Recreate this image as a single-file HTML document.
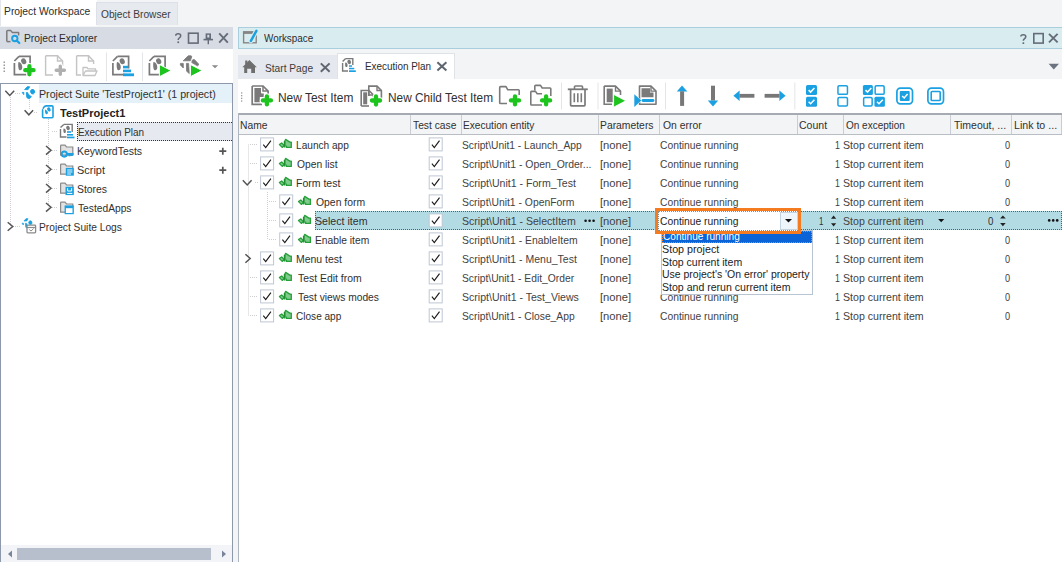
<!DOCTYPE html>
<html><head><meta charset="utf-8"><style>
html,body{margin:0;padding:0;}
body{width:1062px;height:562px;overflow:hidden;position:relative;background:#f3f4f6;font-family:'Liberation Sans', sans-serif;}
</style></head><body>
<div style="position:absolute;left:0px;top:0px;width:97px;height:26px;background:#ffffff;border-left:1px solid #e3e6ea;box-sizing:border-box"></div>
<div style="position:absolute;left:96px;top:2px;width:82px;height:23px;background:#e6e9ee;border:1px solid #dde1e7;border-bottom:none;box-sizing:border-box"></div>
<div style="position:absolute;left:3.76px;top:1.00px;font-family:'Liberation Sans', sans-serif;font-size:11px;line-height:20px;font-weight:normal;color:#2c2c2c;white-space:pre;transform-origin:0 0;transform:scaleX(0.9374)">Project Workspace</div>
<div style="position:absolute;left:101.00px;top:4.00px;font-family:'Liberation Sans', sans-serif;font-size:11px;line-height:20px;font-weight:normal;color:#3c3c3c;white-space:pre;transform-origin:0 0;transform:scaleX(0.9253)">Object Browser</div>
<div style="position:absolute;left:0px;top:27px;width:233px;height:22px;background:#d7dbe3;"></div>
<div style="position:absolute;left:24.46px;top:28.00px;font-family:'Liberation Sans', sans-serif;font-size:11px;line-height:20px;font-weight:normal;color:#2c2c2c;white-space:pre;transform-origin:0 0;transform:scaleX(0.9364)">Project Explorer</div>
<div style="position:absolute;left:0px;top:49px;width:233px;height:34px;background:#ffffff;"></div>
<div style="position:absolute;left:0px;top:83px;width:233px;height:479px;box-sizing:border-box;background:#ffffff;border:1px solid #8d99ab;border-bottom:none"></div>
<div style="position:absolute;left:1px;top:545px;width:231px;height:17px;background:#f2f4f7;"></div>
<div style="position:absolute;left:17px;top:548px;width:194px;height:12px;background:#b8bfcc;"></div>
<svg style="position:absolute;left:7px;top:550px;overflow:visible" width="6" height="8" viewBox="0 0 6 8"><path d="M5 0.5 L1 4 L5 7.5 Z" fill="#7a8599"/></svg>
<svg style="position:absolute;left:221px;top:550px;overflow:visible" width="6" height="8" viewBox="0 0 6 8"><path d="M1 0.5 L5 4 L1 7.5 Z" fill="#7a8599"/></svg>
<div style="position:absolute;left:39px;top:84px;width:193px;height:19px;background:#e5f1f8;"></div>
<div style="position:absolute;left:77px;top:122px;width:155px;height:19px;box-sizing:border-box;background:#e6e9ef;border:1px dotted #333;border-right:none"></div>
<div style="position:absolute;left:39.03px;top:84.00px;font-family:'Liberation Sans', sans-serif;font-size:11px;line-height:20px;font-weight:normal;color:#303030;white-space:pre;transform-origin:0 0;transform:scaleX(0.9669)">Project Suite &#x27;TestProject1&#x27; (1 project)</div>
<div style="position:absolute;left:60.00px;top:103.00px;font-family:'Liberation Sans', sans-serif;font-size:11px;line-height:20px;font-weight:bold;color:#222222;white-space:pre;transform-origin:0 0;transform:scaleX(1.0031)">TestProject1</div>
<div style="position:absolute;left:77.70px;top:122.00px;font-family:'Liberation Sans', sans-serif;font-size:11px;line-height:20px;font-weight:normal;color:#303030;white-space:pre;transform-origin:0 0;transform:scaleX(0.9000)">Execution Plan</div>
<div style="position:absolute;left:77.05px;top:141.00px;font-family:'Liberation Sans', sans-serif;font-size:11px;line-height:20px;font-weight:normal;color:#303030;white-space:pre;transform-origin:0 0;transform:scaleX(0.9507)">KeywordTests</div>
<div style="position:absolute;left:77.01px;top:160.00px;font-family:'Liberation Sans', sans-serif;font-size:11px;line-height:20px;font-weight:normal;color:#303030;white-space:pre;transform-origin:0 0;transform:scaleX(0.9926)">Script</div>
<div style="position:absolute;left:77.05px;top:179.00px;font-family:'Liberation Sans', sans-serif;font-size:11px;line-height:20px;font-weight:normal;color:#303030;white-space:pre;transform-origin:0 0;transform:scaleX(0.9452)">Stores</div>
<div style="position:absolute;left:78.00px;top:198.00px;font-family:'Liberation Sans', sans-serif;font-size:11px;line-height:20px;font-weight:normal;color:#303030;white-space:pre;transform-origin:0 0;transform:scaleX(0.9298)">TestedApps</div>
<div style="position:absolute;left:39.07px;top:217.00px;font-family:'Liberation Sans', sans-serif;font-size:11px;line-height:20px;font-weight:normal;color:#303030;white-space:pre;transform-origin:0 0;transform:scaleX(0.9284)">Project Suite Logs</div>
<div style="position:absolute;left:238px;top:27px;width:824px;height:22px;box-sizing:border-box;background:#d9edf1;border:1px solid #a9cfde;border-right:none"></div>
<div style="position:absolute;left:263.90px;top:28.00px;font-family:'Liberation Sans', sans-serif;font-size:11px;line-height:20px;font-weight:normal;color:#2c2c2c;white-space:pre;transform-origin:0 0;transform:scaleX(0.8982)">Workspace</div>
<div style="position:absolute;left:238px;top:55px;width:99px;height:24px;background:#e5e8ee;"></div>
<div style="position:absolute;left:337px;top:53px;width:118px;height:27px;box-sizing:border-box;background:#ffffff;border:1px solid #dfe3e8;border-bottom:none"></div>
<div style="position:absolute;left:265.07px;top:58.00px;font-family:'Liberation Sans', sans-serif;font-size:11px;line-height:20px;font-weight:normal;color:#3c3c3c;white-space:pre;transform-origin:0 0;transform:scaleX(0.9255)">Start Page</div>
<div style="position:absolute;left:364.70px;top:56.00px;font-family:'Liberation Sans', sans-serif;font-size:11px;line-height:20px;font-weight:normal;color:#2c2c2c;white-space:pre;transform-origin:0 0;transform:scaleX(0.9000)">Execution Plan</div>
<div style="position:absolute;left:238px;top:79px;width:824px;height:34px;background:#ffffff;"></div>
<div style="position:absolute;left:278.41px;top:88.00px;font-family:'Liberation Sans', sans-serif;font-size:12px;line-height:20px;font-weight:normal;color:#303030;white-space:pre;transform-origin:0 0;transform:scaleX(0.9946)">New Test Item</div>
<div style="position:absolute;left:387.51px;top:88.00px;font-family:'Liberation Sans', sans-serif;font-size:12px;line-height:20px;font-weight:normal;color:#303030;white-space:pre;transform-origin:0 0;transform:scaleX(0.9867)">New Child Test Item</div>
<div style="position:absolute;left:238px;top:113px;width:824px;height:449px;background:#ffffff;"></div>
<div style="position:absolute;left:238px;top:113px;width:824px;height:2px;background:#a6abb3;"></div>
<div style="position:absolute;left:238px;top:115px;width:824px;height:19px;background:#f3f4f6;"></div>
<div style="position:absolute;left:238px;top:134px;width:824px;height:1px;background:#b9bdc4;"></div>
<div style="position:absolute;left:238px;top:113px;width:1px;height:449px;background:#aeb5c0;"></div>
<div style="position:absolute;left:410px;top:115px;width:1px;height:19px;background:#c9cdd3;"></div>
<div style="position:absolute;left:461px;top:115px;width:1px;height:19px;background:#c9cdd3;"></div>
<div style="position:absolute;left:598px;top:115px;width:1px;height:19px;background:#c9cdd3;"></div>
<div style="position:absolute;left:659px;top:115px;width:1px;height:19px;background:#c9cdd3;"></div>
<div style="position:absolute;left:797px;top:115px;width:1px;height:19px;background:#c9cdd3;"></div>
<div style="position:absolute;left:843px;top:115px;width:1px;height:19px;background:#c9cdd3;"></div>
<div style="position:absolute;left:950px;top:115px;width:1px;height:19px;background:#c9cdd3;"></div>
<div style="position:absolute;left:1011px;top:115px;width:1px;height:19px;background:#c9cdd3;"></div>
<div style="position:absolute;left:1061px;top:115px;width:1px;height:19px;background:#c9cdd3;"></div>
<div style="position:absolute;left:240.06px;top:115.00px;font-family:'Liberation Sans', sans-serif;font-size:11px;line-height:20px;font-weight:normal;color:#303030;white-space:pre;transform-origin:0 0;transform:scaleX(0.9357)">Name</div>
<div style="position:absolute;left:413.40px;top:115.00px;font-family:'Liberation Sans', sans-serif;font-size:11px;line-height:20px;font-weight:normal;color:#303030;white-space:pre;transform-origin:0 0;transform:scaleX(0.9326)">Test case</div>
<div style="position:absolute;left:463.48px;top:115.00px;font-family:'Liberation Sans', sans-serif;font-size:11px;line-height:20px;font-weight:normal;color:#303030;white-space:pre;transform-origin:0 0;transform:scaleX(0.9195)">Execution entity</div>
<div style="position:absolute;left:600.36px;top:115.00px;font-family:'Liberation Sans', sans-serif;font-size:11px;line-height:20px;font-weight:normal;color:#303030;white-space:pre;transform-origin:0 0;transform:scaleX(0.9411)">Parameters</div>
<div style="position:absolute;left:662.80px;top:115.00px;font-family:'Liberation Sans', sans-serif;font-size:11px;line-height:20px;font-weight:normal;color:#303030;white-space:pre;transform-origin:0 0;transform:scaleX(0.9439)">On error</div>
<div style="position:absolute;left:799.24px;top:115.00px;font-family:'Liberation Sans', sans-serif;font-size:11px;line-height:20px;font-weight:normal;color:#303030;white-space:pre;transform-origin:0 0;transform:scaleX(0.9571)">Count</div>
<div style="position:absolute;left:845.70px;top:115.00px;font-family:'Liberation Sans', sans-serif;font-size:11px;line-height:20px;font-weight:normal;color:#303030;white-space:pre;transform-origin:0 0;transform:scaleX(0.9078)">On exception</div>
<div style="position:absolute;left:953.50px;top:115.00px;font-family:'Liberation Sans', sans-serif;font-size:11px;line-height:20px;font-weight:normal;color:#303030;white-space:pre;transform-origin:0 0;transform:scaleX(0.9537)">Timeout, ...</div>
<div style="position:absolute;left:1013.53px;top:115.00px;font-family:'Liberation Sans', sans-serif;font-size:11px;line-height:20px;font-weight:normal;color:#303030;white-space:pre;transform-origin:0 0;transform:scaleX(0.9651)">Link to ...</div>
<div style="position:absolute;left:315px;top:211px;width:747px;height:19px;box-sizing:border-box;background:#b2dbe4;border:1px dotted #8a4b4b"></div>
<div style="position:absolute;left:295.88px;top:135.00px;font-family:'Liberation Sans', sans-serif;font-size:11px;line-height:20px;font-weight:normal;color:#303030;white-space:pre;transform-origin:0 0;transform:scaleX(0.9196)">Launch app</div>
<div style="position:absolute;left:462.07px;top:135.00px;font-family:'Liberation Sans', sans-serif;font-size:11px;line-height:20px;font-weight:normal;color:#424242;white-space:pre;transform-origin:0 0;transform:scaleX(0.9323)">Script\Unit1 - Launch_App</div>
<div style="position:absolute;left:599.58px;top:135.00px;font-family:'Liberation Sans', sans-serif;font-size:11px;line-height:20px;font-weight:normal;color:#424242;white-space:pre;transform-origin:0 0;transform:scaleX(1.0207)">[none]</div>
<div style="position:absolute;left:660.26px;top:135.00px;font-family:'Liberation Sans', sans-serif;font-size:11px;line-height:20px;font-weight:normal;color:#424242;white-space:pre;transform-origin:0 0;transform:scaleX(0.9366)">Continue running</div>
<div style="position:absolute;left:834.80px;top:135.00px;font-family:'Liberation Sans', sans-serif;font-size:11px;line-height:20px;font-weight:normal;color:#3c3c3c;white-space:pre;transform-origin:0 0;transform:scaleX(0.8000)">1</div>
<div style="position:absolute;left:1004.60px;top:135.00px;font-family:'Liberation Sans', sans-serif;font-size:11px;line-height:20px;font-weight:normal;color:#3c3c3c;white-space:pre;transform-origin:0 0;transform:scaleX(0.8333)">0</div>
<div style="position:absolute;left:843.04px;top:135.00px;font-family:'Liberation Sans', sans-serif;font-size:11px;line-height:20px;font-weight:normal;color:#424242;white-space:pre;transform-origin:0 0;transform:scaleX(0.9634)">Stop current item</div>
<div style="position:absolute;left:296.80px;top:154.00px;font-family:'Liberation Sans', sans-serif;font-size:11px;line-height:20px;font-weight:normal;color:#303030;white-space:pre;transform-origin:0 0;transform:scaleX(0.9349)">Open list</div>
<div style="position:absolute;left:462.05px;top:154.00px;font-family:'Liberation Sans', sans-serif;font-size:11px;line-height:20px;font-weight:normal;color:#424242;white-space:pre;transform-origin:0 0;transform:scaleX(0.9496)">Script\Unit1 - Open_Order...</div>
<div style="position:absolute;left:599.58px;top:154.00px;font-family:'Liberation Sans', sans-serif;font-size:11px;line-height:20px;font-weight:normal;color:#424242;white-space:pre;transform-origin:0 0;transform:scaleX(1.0207)">[none]</div>
<div style="position:absolute;left:660.26px;top:154.00px;font-family:'Liberation Sans', sans-serif;font-size:11px;line-height:20px;font-weight:normal;color:#424242;white-space:pre;transform-origin:0 0;transform:scaleX(0.9366)">Continue running</div>
<div style="position:absolute;left:834.80px;top:154.00px;font-family:'Liberation Sans', sans-serif;font-size:11px;line-height:20px;font-weight:normal;color:#3c3c3c;white-space:pre;transform-origin:0 0;transform:scaleX(0.8000)">1</div>
<div style="position:absolute;left:1004.60px;top:154.00px;font-family:'Liberation Sans', sans-serif;font-size:11px;line-height:20px;font-weight:normal;color:#3c3c3c;white-space:pre;transform-origin:0 0;transform:scaleX(0.8333)">0</div>
<div style="position:absolute;left:843.04px;top:154.00px;font-family:'Liberation Sans', sans-serif;font-size:11px;line-height:20px;font-weight:normal;color:#424242;white-space:pre;transform-origin:0 0;transform:scaleX(0.9634)">Stop current item</div>
<div style="position:absolute;left:295.85px;top:173.00px;font-family:'Liberation Sans', sans-serif;font-size:11px;line-height:20px;font-weight:normal;color:#303030;white-space:pre;transform-origin:0 0;transform:scaleX(0.9543)">Form test</div>
<div style="position:absolute;left:462.04px;top:173.00px;font-family:'Liberation Sans', sans-serif;font-size:11px;line-height:20px;font-weight:normal;color:#424242;white-space:pre;transform-origin:0 0;transform:scaleX(0.9610)">Script\Unit1 - Form_Test</div>
<div style="position:absolute;left:599.58px;top:173.00px;font-family:'Liberation Sans', sans-serif;font-size:11px;line-height:20px;font-weight:normal;color:#424242;white-space:pre;transform-origin:0 0;transform:scaleX(1.0207)">[none]</div>
<div style="position:absolute;left:660.26px;top:173.00px;font-family:'Liberation Sans', sans-serif;font-size:11px;line-height:20px;font-weight:normal;color:#424242;white-space:pre;transform-origin:0 0;transform:scaleX(0.9366)">Continue running</div>
<div style="position:absolute;left:834.80px;top:173.00px;font-family:'Liberation Sans', sans-serif;font-size:11px;line-height:20px;font-weight:normal;color:#3c3c3c;white-space:pre;transform-origin:0 0;transform:scaleX(0.8000)">1</div>
<div style="position:absolute;left:1004.60px;top:173.00px;font-family:'Liberation Sans', sans-serif;font-size:11px;line-height:20px;font-weight:normal;color:#3c3c3c;white-space:pre;transform-origin:0 0;transform:scaleX(0.8333)">0</div>
<div style="position:absolute;left:843.04px;top:173.00px;font-family:'Liberation Sans', sans-serif;font-size:11px;line-height:20px;font-weight:normal;color:#424242;white-space:pre;transform-origin:0 0;transform:scaleX(0.9634)">Stop current item</div>
<div style="position:absolute;left:315.80px;top:192.00px;font-family:'Liberation Sans', sans-serif;font-size:11px;line-height:20px;font-weight:normal;color:#303030;white-space:pre;transform-origin:0 0;transform:scaleX(0.9451)">Open form</div>
<div style="position:absolute;left:462.06px;top:192.00px;font-family:'Liberation Sans', sans-serif;font-size:11px;line-height:20px;font-weight:normal;color:#424242;white-space:pre;transform-origin:0 0;transform:scaleX(0.9432)">Script\Unit1 - OpenForm</div>
<div style="position:absolute;left:599.58px;top:192.00px;font-family:'Liberation Sans', sans-serif;font-size:11px;line-height:20px;font-weight:normal;color:#424242;white-space:pre;transform-origin:0 0;transform:scaleX(1.0207)">[none]</div>
<div style="position:absolute;left:660.26px;top:192.00px;font-family:'Liberation Sans', sans-serif;font-size:11px;line-height:20px;font-weight:normal;color:#424242;white-space:pre;transform-origin:0 0;transform:scaleX(0.9366)">Continue running</div>
<div style="position:absolute;left:834.80px;top:192.00px;font-family:'Liberation Sans', sans-serif;font-size:11px;line-height:20px;font-weight:normal;color:#3c3c3c;white-space:pre;transform-origin:0 0;transform:scaleX(0.8000)">1</div>
<div style="position:absolute;left:1004.60px;top:192.00px;font-family:'Liberation Sans', sans-serif;font-size:11px;line-height:20px;font-weight:normal;color:#3c3c3c;white-space:pre;transform-origin:0 0;transform:scaleX(0.8333)">0</div>
<div style="position:absolute;left:843.04px;top:192.00px;font-family:'Liberation Sans', sans-serif;font-size:11px;line-height:20px;font-weight:normal;color:#424242;white-space:pre;transform-origin:0 0;transform:scaleX(0.9634)">Stop current item</div>
<div style="position:absolute;left:314.84px;top:211.00px;font-family:'Liberation Sans', sans-serif;font-size:11px;line-height:20px;font-weight:normal;color:#303030;white-space:pre;transform-origin:0 0;transform:scaleX(0.9642)">Select item</div>
<div style="position:absolute;left:462.04px;top:211.00px;font-family:'Liberation Sans', sans-serif;font-size:11px;line-height:20px;font-weight:normal;color:#424242;white-space:pre;transform-origin:0 0;transform:scaleX(0.9590)">Script\Unit1 - SelectItem</div>
<div style="position:absolute;left:599.58px;top:211.00px;font-family:'Liberation Sans', sans-serif;font-size:11px;line-height:20px;font-weight:normal;color:#424242;white-space:pre;transform-origin:0 0;transform:scaleX(1.0207)">[none]</div>
<div style="position:absolute;left:843.04px;top:211.00px;font-family:'Liberation Sans', sans-serif;font-size:11px;line-height:20px;font-weight:normal;color:#424242;white-space:pre;transform-origin:0 0;transform:scaleX(0.9634)">Stop current item</div>
<div style="position:absolute;left:314.87px;top:230.00px;font-family:'Liberation Sans', sans-serif;font-size:11px;line-height:20px;font-weight:normal;color:#303030;white-space:pre;transform-origin:0 0;transform:scaleX(0.9333)">Enable item</div>
<div style="position:absolute;left:462.05px;top:230.00px;font-family:'Liberation Sans', sans-serif;font-size:11px;line-height:20px;font-weight:normal;color:#424242;white-space:pre;transform-origin:0 0;transform:scaleX(0.9455)">Script\Unit1 - EnableItem</div>
<div style="position:absolute;left:599.58px;top:230.00px;font-family:'Liberation Sans', sans-serif;font-size:11px;line-height:20px;font-weight:normal;color:#424242;white-space:pre;transform-origin:0 0;transform:scaleX(1.0207)">[none]</div>
<div style="position:absolute;left:834.80px;top:230.00px;font-family:'Liberation Sans', sans-serif;font-size:11px;line-height:20px;font-weight:normal;color:#3c3c3c;white-space:pre;transform-origin:0 0;transform:scaleX(0.8000)">1</div>
<div style="position:absolute;left:1004.60px;top:230.00px;font-family:'Liberation Sans', sans-serif;font-size:11px;line-height:20px;font-weight:normal;color:#3c3c3c;white-space:pre;transform-origin:0 0;transform:scaleX(0.8333)">0</div>
<div style="position:absolute;left:843.04px;top:230.00px;font-family:'Liberation Sans', sans-serif;font-size:11px;line-height:20px;font-weight:normal;color:#424242;white-space:pre;transform-origin:0 0;transform:scaleX(0.9634)">Stop current item</div>
<div style="position:absolute;left:295.85px;top:249.00px;font-family:'Liberation Sans', sans-serif;font-size:11px;line-height:20px;font-weight:normal;color:#303030;white-space:pre;transform-origin:0 0;transform:scaleX(0.9511)">Menu test</div>
<div style="position:absolute;left:462.05px;top:249.00px;font-family:'Liberation Sans', sans-serif;font-size:11px;line-height:20px;font-weight:normal;color:#424242;white-space:pre;transform-origin:0 0;transform:scaleX(0.9533)">Script\Unit1 - Menu_Test</div>
<div style="position:absolute;left:599.58px;top:249.00px;font-family:'Liberation Sans', sans-serif;font-size:11px;line-height:20px;font-weight:normal;color:#424242;white-space:pre;transform-origin:0 0;transform:scaleX(1.0207)">[none]</div>
<div style="position:absolute;left:834.80px;top:249.00px;font-family:'Liberation Sans', sans-serif;font-size:11px;line-height:20px;font-weight:normal;color:#3c3c3c;white-space:pre;transform-origin:0 0;transform:scaleX(0.8000)">1</div>
<div style="position:absolute;left:1004.60px;top:249.00px;font-family:'Liberation Sans', sans-serif;font-size:11px;line-height:20px;font-weight:normal;color:#3c3c3c;white-space:pre;transform-origin:0 0;transform:scaleX(0.8333)">0</div>
<div style="position:absolute;left:843.04px;top:249.00px;font-family:'Liberation Sans', sans-serif;font-size:11px;line-height:20px;font-weight:normal;color:#424242;white-space:pre;transform-origin:0 0;transform:scaleX(0.9634)">Stop current item</div>
<div style="position:absolute;left:297.60px;top:268.00px;font-family:'Liberation Sans', sans-serif;font-size:11px;line-height:20px;font-weight:normal;color:#303030;white-space:pre;transform-origin:0 0;transform:scaleX(0.9463)">Test Edit from</div>
<div style="position:absolute;left:462.06px;top:268.00px;font-family:'Liberation Sans', sans-serif;font-size:11px;line-height:20px;font-weight:normal;color:#424242;white-space:pre;transform-origin:0 0;transform:scaleX(0.9353)">Script\Unit1 - Edit_Order</div>
<div style="position:absolute;left:599.58px;top:268.00px;font-family:'Liberation Sans', sans-serif;font-size:11px;line-height:20px;font-weight:normal;color:#424242;white-space:pre;transform-origin:0 0;transform:scaleX(1.0207)">[none]</div>
<div style="position:absolute;left:834.80px;top:268.00px;font-family:'Liberation Sans', sans-serif;font-size:11px;line-height:20px;font-weight:normal;color:#3c3c3c;white-space:pre;transform-origin:0 0;transform:scaleX(0.8000)">1</div>
<div style="position:absolute;left:1004.60px;top:268.00px;font-family:'Liberation Sans', sans-serif;font-size:11px;line-height:20px;font-weight:normal;color:#3c3c3c;white-space:pre;transform-origin:0 0;transform:scaleX(0.8333)">0</div>
<div style="position:absolute;left:843.04px;top:268.00px;font-family:'Liberation Sans', sans-serif;font-size:11px;line-height:20px;font-weight:normal;color:#424242;white-space:pre;transform-origin:0 0;transform:scaleX(0.9634)">Stop current item</div>
<div style="position:absolute;left:297.60px;top:287.00px;font-family:'Liberation Sans', sans-serif;font-size:11px;line-height:20px;font-weight:normal;color:#303030;white-space:pre;transform-origin:0 0;transform:scaleX(0.9322)">Test views modes</div>
<div style="position:absolute;left:462.04px;top:287.00px;font-family:'Liberation Sans', sans-serif;font-size:11px;line-height:20px;font-weight:normal;color:#424242;white-space:pre;transform-origin:0 0;transform:scaleX(0.9587)">Script\Unit1 - Test_Views</div>
<div style="position:absolute;left:599.58px;top:287.00px;font-family:'Liberation Sans', sans-serif;font-size:11px;line-height:20px;font-weight:normal;color:#424242;white-space:pre;transform-origin:0 0;transform:scaleX(1.0207)">[none]</div>
<div style="position:absolute;left:660.26px;top:287.00px;font-family:'Liberation Sans', sans-serif;font-size:11px;line-height:20px;font-weight:normal;color:#424242;white-space:pre;transform-origin:0 0;transform:scaleX(0.9366)">Continue running</div>
<div style="position:absolute;left:834.80px;top:287.00px;font-family:'Liberation Sans', sans-serif;font-size:11px;line-height:20px;font-weight:normal;color:#3c3c3c;white-space:pre;transform-origin:0 0;transform:scaleX(0.8000)">1</div>
<div style="position:absolute;left:1004.60px;top:287.00px;font-family:'Liberation Sans', sans-serif;font-size:11px;line-height:20px;font-weight:normal;color:#3c3c3c;white-space:pre;transform-origin:0 0;transform:scaleX(0.8333)">0</div>
<div style="position:absolute;left:843.04px;top:287.00px;font-family:'Liberation Sans', sans-serif;font-size:11px;line-height:20px;font-weight:normal;color:#424242;white-space:pre;transform-origin:0 0;transform:scaleX(0.9634)">Stop current item</div>
<div style="position:absolute;left:295.89px;top:306.00px;font-family:'Liberation Sans', sans-serif;font-size:11px;line-height:20px;font-weight:normal;color:#303030;white-space:pre;transform-origin:0 0;transform:scaleX(0.9146)">Close app</div>
<div style="position:absolute;left:462.06px;top:306.00px;font-family:'Liberation Sans', sans-serif;font-size:11px;line-height:20px;font-weight:normal;color:#424242;white-space:pre;transform-origin:0 0;transform:scaleX(0.9353)">Script\Unit1 - Close_App</div>
<div style="position:absolute;left:599.58px;top:306.00px;font-family:'Liberation Sans', sans-serif;font-size:11px;line-height:20px;font-weight:normal;color:#424242;white-space:pre;transform-origin:0 0;transform:scaleX(1.0207)">[none]</div>
<div style="position:absolute;left:660.26px;top:306.00px;font-family:'Liberation Sans', sans-serif;font-size:11px;line-height:20px;font-weight:normal;color:#424242;white-space:pre;transform-origin:0 0;transform:scaleX(0.9366)">Continue running</div>
<div style="position:absolute;left:834.80px;top:306.00px;font-family:'Liberation Sans', sans-serif;font-size:11px;line-height:20px;font-weight:normal;color:#3c3c3c;white-space:pre;transform-origin:0 0;transform:scaleX(0.8000)">1</div>
<div style="position:absolute;left:1004.60px;top:306.00px;font-family:'Liberation Sans', sans-serif;font-size:11px;line-height:20px;font-weight:normal;color:#3c3c3c;white-space:pre;transform-origin:0 0;transform:scaleX(0.8333)">0</div>
<div style="position:absolute;left:843.04px;top:306.00px;font-family:'Liberation Sans', sans-serif;font-size:11px;line-height:20px;font-weight:normal;color:#424242;white-space:pre;transform-origin:0 0;transform:scaleX(0.9634)">Stop current item</div>
<svg style="position:absolute;left:0;top:0" width="1062" height="562" viewBox="0 0 1062 562"><path d="M6.8,41.6 V31.4 Q6.8,30.6 7.6,30.6 H10.8 L12.2,32.4 H18.6 V35.5" fill="none" stroke="#7a7a7a" stroke-width="1.5" stroke-linejoin="round"/><path d="M6.8,41.6 H10.5" fill="none" stroke="#7a7a7a" stroke-width="1.5"/><circle cx="14.8" cy="38.5" r="2.7" fill="none" stroke="#1ba1e2" stroke-width="1.9"/><path d="M16.8,40.6 L19.3,43" stroke="#1ba1e2" stroke-width="2.2" stroke-linecap="round"/><path d="M175.70000000000002,35.7 C175.70000000000002,33.300000000000004 180.70000000000002,33.1 180.70000000000002,35.9 C180.70000000000002,37.7 178.20000000000002,37.9 178.20000000000002,39.9" fill="none" stroke="#656c78" stroke-width="1.5"/><rect x="177.4" y="41.400000000000006" width="1.7" height="1.7" fill="#656c78"/><rect x="188.5" y="33.2" width="9.6" height="9.9" fill="none" stroke="#656c78" stroke-width="1.6"/><path d="M205.6,33.4 H211 V39.5 H205.6 Z" fill="#656c78"/><path d="M207.3,34.8 H209.3 V37.5 H207.3Z" fill="#d7dbe3"/><path d="M203.5,39.6 H213" stroke="#656c78" stroke-width="1.6"/><path d="M208.3,39.6 V44.2" stroke="#656c78" stroke-width="1.4"/><path d="M219.2,33.4 L227.8,42.6 M227.8,33.4 L219.2,42.6" stroke="#656c78" stroke-width="1.9"/><rect x="3.5" y="61.5" width="1.5" height="1.5" fill="#9a9a9a"/><rect x="3.5" y="64.5" width="1.5" height="1.5" fill="#9a9a9a"/><rect x="3.5" y="67.5" width="1.5" height="1.5" fill="#9a9a9a"/><rect x="3.5" y="70.5" width="1.5" height="1.5" fill="#9a9a9a"/><path d="M19.0,56.3 H30.1 V68.5" fill="none" stroke="#7a7a7a" stroke-width="1.7"/><path d="M19.0,56.3 L14.4,61.0" fill="none" stroke="#7a7a7a" stroke-width="1.7"/><path d="M14.4,63.0 V74.7 H26.5" fill="none" stroke="#7a7a7a" stroke-width="1.7"/><g fill="#7a7a7a"><ellipse cx="23.7" cy="61.3" rx="2.5" ry="3" transform="rotate(-25 23.7 61.3)"/><path d="M18.5,62.0 C20.5,61.8 22.0,64.0 22.3,67.0 C22.5,69.5 20.5,71.0 19.3,70.0 C18.1,69.0 17.9,64.0 18.5,62.0 Z"/></g><g stroke-linecap="round"><path d="M25.249999999999996,70.2 H33.55 M29.4,66.05000000000001 V74.35" stroke="#ffffff" stroke-width="6.3"/><path d="M25.249999999999996,70.2 H33.55 M29.4,66.05000000000001 V74.35" stroke="#1ec41e" stroke-width="4.3"/></g><path d="M45.6,55.8 H57.5 L62.6,61 V66" fill="none" stroke="#c4c4c4" stroke-width="1.4"/><path d="M57.5,55.8 V61 H62.6" fill="none" stroke="#c4c4c4" stroke-width="1.4"/><path d="M45.6,55.8 V75 H53" fill="none" stroke="#c4c4c4" stroke-width="1.4"/><g stroke-linecap="round"><path d="M56.2,70.2 H64.39999999999999 M60.3,66.10000000000001 V74.3" stroke="#ffffff" stroke-width="5.4"/><path d="M56.2,70.2 H64.39999999999999 M60.3,66.10000000000001 V74.3" stroke="#b0b0b0" stroke-width="3.4"/></g><path d="M76.6,55.8 H88.5 L93.6,61 V64" fill="none" stroke="#c4c4c4" stroke-width="1.4"/><path d="M88.5,55.8 V61 H93.6" fill="none" stroke="#c4c4c4" stroke-width="1.4"/><path d="M76.6,55.8 V75 H81" fill="none" stroke="#c4c4c4" stroke-width="1.4"/><path d="M83,75.5 V67.5 H87 L88,68.8 H95.5 V71 M83,75.5 L85.5,71 H97 L95,75.5 Z" fill="#fff" stroke="#c4c4c4" stroke-width="1.3" stroke-linejoin="round"/><rect x="106" y="52.5" width="1" height="28.5" fill="#e3e5e9"/><path d="M117.5,56.3 H128.6 V68.5" fill="none" stroke="#7a7a7a" stroke-width="1.7"/><path d="M117.5,56.3 L112.9,61.0" fill="none" stroke="#7a7a7a" stroke-width="1.7"/><path d="M112.9,63.0 V74.7 H125" fill="none" stroke="#7a7a7a" stroke-width="1.7"/><g fill="#7a7a7a"><ellipse cx="122.2" cy="61.3" rx="2.5" ry="3" transform="rotate(-25 122.2 61.3)"/><path d="M117,62.0 C119,61.8 120.5,64.0 120.8,67.0 C121,69.5 119,71.0 117.8,70.0 C116.6,69.0 116.4,64.0 117,62.0 Z"/></g><rect x="122.5" y="66.8" width="5.5" height="2.4" fill="#fff"/><rect x="123" y="65.8" width="5.2" height="2.6" fill="#1ba1e2"/><rect x="123" y="69.6" width="8" height="2.6" fill="#1ba1e2"/><rect x="123" y="73.4" width="11" height="2.8" fill="#1ba1e2"/><rect x="142" y="52.5" width="1" height="28.5" fill="#e3e5e9"/><path d="M154.0,56.3 H165.1 V68.5" fill="none" stroke="#7a7a7a" stroke-width="1.7"/><path d="M154.0,56.3 L149.4,61.0" fill="none" stroke="#7a7a7a" stroke-width="1.7"/><path d="M149.4,63.0 V74.7 H161.5" fill="none" stroke="#7a7a7a" stroke-width="1.7"/><g fill="#7a7a7a"><ellipse cx="158.7" cy="61.3" rx="2.5" ry="3" transform="rotate(-25 158.7 61.3)"/><path d="M153.5,62.0 C155.5,61.8 157.0,64.0 157.3,67.0 C157.5,69.5 155.5,71.0 154.3,70.0 C153.1,69.0 152.9,64.0 153.5,62.0 Z"/></g><path d="M159.4,64.5 L171.2,70.6 L159.4,76.7 Z" fill="#1ec41e" stroke="#fff" stroke-width="1"/><g transform="translate(176,52) scale(1.0)" fill="#7a7a7a" stroke="#7a7a7a" stroke-width="0.8" stroke-linejoin="round"><path d="M7.2,8.8 L12.2,3.8 L15,3.8 Q15.9,4.1 15.7,4.9 L14.3,8.8 Z"/><path d="M4.4,11.4 L7.3,11.4 L7.3,16 L4.4,13 Z"/><path d="M10.4,11.4 L12.6,11.4 L13.3,21.6 L10.6,19.2 Z"/><path d="M15.8,10.6 L16.2,8.4 Q17.3,7 18.4,7.6 L22.6,12 Q22.8,13.4 21.4,13.8 Z"/></g><path d="M190.4,64.5 L202.2,70.6 L190.4,76.7 Z" fill="#1ec41e" stroke="#fff" stroke-width="1"/><path d="M211.8,65.3 H218.2 L215,68.3 Z" fill="#8a8a8a"/><path d="M10.5,97 V226.5 M15,93.5 H20 M29.5,100 V110 M34,112.5 H38 M48.5,119 V207.5 M52,131.5 H58 M52,150.5 H58 M52,169.5 H58 M52,188.5 H58 M52,207.5 H58 M13,226.5 H20" fill="none" stroke="#cfcfcf" stroke-width="1" stroke-dasharray="1,1"/><path d="M5.3,90.8 L9.75,95.39999999999999 L14.2,90.8" fill="none" stroke="#555" stroke-width="1.5"/><g transform="translate(19,84) scale(1.0)" fill="#1ba1e2" stroke="#1ba1e2" stroke-width="0.9" stroke-linejoin="round"><path d="M5.6,5.6 L8.4,2.6 L10.7,2.8 L9.1,5.6 Z"/><path d="M3.2,8.4 L4.9,8.4 L4.7,10.6 Z"/><path d="M7.4,8.5 L8.6,8.5 C9.2,10.5 10.4,11.7 12.4,12.6 L10.5,14.7 C8.6,14.7 7.6,13.8 7.6,12 Z"/><ellipse cx="13.6" cy="7.7" rx="2" ry="2.3" transform="rotate(-20 13.6 7.7)"/></g><path d="M24.6,110.2 L28.85,114.8 L33.1,110.2" fill="none" stroke="#555" stroke-width="1.5"/><path d="M43.3,108.2 Q44.3,106 46,105.9 H52 Q53,105.9 53,106.9 V116.8 Q53,117.8 52,117.8 H43.6 Q42.6,117.8 42.6,116.8 V109.8" fill="none" stroke="#1ba1e2" stroke-width="1.6" stroke-linecap="round"/><g fill="#1ba1e2"><ellipse cx="48.9" cy="109.4" rx="1.7" ry="2.2" transform="rotate(-25 48.9 109.4)"/><path d="M45.1,109.5 C46.4,109.8 47.7,111.2 47.9,112.6 C48.1,114.1 46.6,114.7 45.9,114.1 C45.1,113.4 44.8,111 45.1,109.5 Z"/></g><path d="M63.8,124.4 H72.2 V132" fill="none" stroke="#7a7a7a" stroke-width="1.4"/><path d="M63.8,124.4 L60.5,127.6" stroke="#7a7a7a" stroke-width="1.4"/><path d="M60.5,129 V137 H66.5" fill="none" stroke="#7a7a7a" stroke-width="1.4"/><g fill="#7a7a7a"><ellipse cx="68" cy="128" rx="1.8" ry="2.2" transform="rotate(-25 68 128)"/><path d="M63.6,128.4 C65,128.2 65.8,129.6 65.9,131.2 C66,132.8 64.8,133.4 64.1,132.9 C63.3,132.3 63.2,129.6 63.6,128.4Z"/></g><rect x="67" y="131.2" width="4" height="1.6" fill="#1ba1e2"/><rect x="67" y="134" width="6" height="1.6" fill="#1ba1e2"/><rect x="67" y="136.6" width="7.5" height="1.7" fill="#1ba1e2"/><path d="M60.6,155.2 V145.79999999999998 Q60.6,145.2 61.2,145.2 H65 L66.5,147.0 H72.80000000000001 V155.2 Z" fill="#e2e2e2" stroke="#8a8a8a" stroke-width="1.2"/><path d="M60.6,174.2 V164.79999999999998 Q60.6,164.2 61.2,164.2 H65 L66.5,166.0 H72.80000000000001 V174.2 Z" fill="#e2e2e2" stroke="#8a8a8a" stroke-width="1.2"/><path d="M60.6,193.2 V183.79999999999998 Q60.6,183.2 61.2,183.2 H65 L66.5,185.0 H72.80000000000001 V193.2 Z" fill="#e2e2e2" stroke="#8a8a8a" stroke-width="1.2"/><path d="M60.6,212.2 V202.79999999999998 Q60.6,202.2 61.2,202.2 H65 L66.5,204.0 H72.80000000000001 V212.2 Z" fill="#e2e2e2" stroke="#8a8a8a" stroke-width="1.2"/><circle cx="64.3" cy="154.1" r="2.6" fill="none" stroke="#1ba1e2" stroke-width="1.9"/><path d="M66.8,153.9 H73.6 M69.5,154 V156.2 M71.8,154 V156" stroke="#1ba1e2" stroke-width="2"/><rect x="65.8" y="167.9" width="8" height="7.8" fill="#1ba1e2"/><path d="M67.2,170 H72.4 M67.2,172 H72.4 M67.2,174 H71" stroke="#fff" stroke-width="0.9"/><rect x="65.5" y="186.8" width="8.3" height="8.3" fill="#1ba1e2"/><path d="M67.6,188.2 V191 H71.6 V188.2 M67,193.4 H72.3" fill="none" stroke="#fff" stroke-width="1"/><rect x="64.6" y="205.4" width="9.2" height="8.8" fill="#1ba1e2"/><rect x="65.9" y="208.2" width="6.6" height="4.8" fill="#fff"/><path d="M46,146 L51,150.3 L46,154.6" fill="none" stroke="#555" stroke-width="1.5"/><path d="M46,165 L51,169.3 L46,173.6" fill="none" stroke="#555" stroke-width="1.5"/><path d="M46,184 L51,188.3 L46,192.6" fill="none" stroke="#555" stroke-width="1.5"/><path d="M46,203 L51,207.3 L46,211.6" fill="none" stroke="#555" stroke-width="1.5"/><path d="M7.7,222.3 L12.7,226.5 L7.7,230.70000000000002" fill="none" stroke="#555" stroke-width="1.5"/><g transform="translate(19.5,216.5) scale(0.8)" fill="#1ba1e2" stroke="#1ba1e2" stroke-width="0.9" stroke-linejoin="round"><path d="M5.6,5.6 L8.4,2.6 L10.7,2.8 L9.1,5.6 Z"/><path d="M3.2,8.4 L4.9,8.4 L4.7,10.6 Z"/><path d="M7.4,8.5 L8.6,8.5 C9.2,10.5 10.4,11.7 12.4,12.6 L10.5,14.7 C8.6,14.7 7.6,13.8 7.6,12 Z"/><ellipse cx="13.6" cy="7.7" rx="2" ry="2.3" transform="rotate(-20 13.6 7.7)"/></g><rect x="27" y="225.2" width="8.6" height="7.6" rx="0.8" fill="#fff" stroke="#8a8a8a" stroke-width="1.3"/><path d="M27,227.5 H35.6" stroke="#8a8a8a" stroke-width="1.2"/><path d="M29.3,229.6 L31,231 L33.6,228.6" fill="none" stroke="#8a8a8a" stroke-width="1"/><path d="M219.3,151.2 H226.3 M222.8,147.7 V154.7" stroke="#555" stroke-width="1.7"/><path d="M219.3,170.2 H226.3 M222.8,166.7 V173.7" stroke="#555" stroke-width="1.7"/><rect x="243.6" y="32" width="12.6" height="10.8" fill="none" stroke="#858585" stroke-width="1.4"/><rect x="243" y="31.3" width="10" height="2.6" fill="#858585"/><path d="M250.9,40.9 L256.4,30.9" stroke="#d9edf1" stroke-width="4.6" stroke-linecap="round"/><path d="M250.9,40.9 L256.4,30.9" stroke="#1ba1e2" stroke-width="2.5" stroke-linecap="round"/><path d="M1020.8,36.6 C1020.8,34.2 1025.8,34 1025.8,36.8 C1025.8,38.6 1023.3,38.8 1023.3,40.8" fill="none" stroke="#656c78" stroke-width="1.5"/><rect x="1022.5" y="42.3" width="1.7" height="1.7" fill="#656c78"/><rect x="1033.8" y="33.6" width="9.4" height="9.5" fill="none" stroke="#656c78" stroke-width="1.6"/><path d="M1049,33.8 L1057.6,42.4 M1057.6,33.8 L1049,42.4" stroke="#656c78" stroke-width="1.9"/><path d="M249.4,60 L242.4,67.2 H244.2 V73 H247.2 V68.8 H251.2 V73 H255 V67.2 H256.8 Z" fill="#6e6e6e"/><rect x="245.2" y="60.5" width="2.2" height="4" fill="#6e6e6e"/><path d="M320.8,63.4 L329.6,71.8 M329.6,63.4 L320.8,71.8" stroke="#5f6670" stroke-width="2"/><path d="M345.6,58.6 H352.8 V65" fill="none" stroke="#7a7a7a" stroke-width="1.4"/><path d="M345.6,58.6 L342.6,61.6" stroke="#7a7a7a" stroke-width="1.4"/><path d="M342.6,63 V71 H348" fill="none" stroke="#7a7a7a" stroke-width="1.4"/><g fill="#7a7a7a"><ellipse cx="349.2" cy="62" rx="1.8" ry="2.2" transform="rotate(-25 349.2 62)"/><path d="M345.3,62.4 C346.7,62.2 347.5,63.6 347.6,65.2 C347.7,66.8 346.5,67.4 345.8,66.9 C345,66.3 344.9,63.6 345.3,62.4Z"/></g><rect x="349" y="65.3" width="3" height="1.5" fill="#1ba1e2"/><rect x="349" y="67.8" width="5.3" height="1.5" fill="#1ba1e2"/><rect x="349" y="70.3" width="6.8" height="1.7" fill="#1ba1e2"/><path d="M437.4,62.2 L446.4,70.6 M446.4,62.2 L437.4,70.6" stroke="#5f6670" stroke-width="2"/><path d="M1048.6,63.8 H1059 L1053.8,69.6 Z" fill="#6b7380"/><rect x="241" y="92.3" width="1.3" height="1.3" fill="#9a9a9a"/><rect x="241" y="95" width="1.3" height="1.3" fill="#9a9a9a"/><rect x="241" y="97.7" width="1.3" height="1.3" fill="#9a9a9a"/><rect x="241" y="100.4" width="1.3" height="1.3" fill="#9a9a9a"/><path d="M252.2,86 H263 L268.1,91.1 V96" fill="none" stroke="#7a7a7a" stroke-width="1.7"/><path d="M263,86 V91.1 H268.1" fill="none" stroke="#7a7a7a" stroke-width="1.5"/><path d="M252.2,86 V104.3 H262" fill="none" stroke="#7a7a7a" stroke-width="1.7"/><path d="M254.4,88 H261 V92.4 Q261,93.4 262,93.4 H263.8 V97 H259.8 V102.2 H254.4 Z" fill="#7a7a7a"/><path d="M259.7,92 V102.4 H261" fill="none" stroke="#7a7a7a" stroke-width="0"/><g stroke-linecap="round"><path d="M262.84999999999997,100.4 H270.95 M266.9,96.35000000000001 V104.45" stroke="#ffffff" stroke-width="6.3"/><path d="M262.84999999999997,100.4 H270.95 M266.9,96.35000000000001 V104.45" stroke="#1ec41e" stroke-width="4.3"/></g><path d="M368.8,96 V86.1 H377 L381.4,90.5 V98" fill="none" stroke="#7a7a7a" stroke-width="1.6"/><path d="M377,86.1 V90.5 H381.4" fill="none" stroke="#7a7a7a" stroke-width="1.4"/><path d="M361.2,106 V90.5 H369 L373.5,95 V98" fill="none" stroke="#7a7a7a" stroke-width="1.6"/><path d="M369,90.5 V95 H373.5" fill="none" stroke="#7a7a7a" stroke-width="1.4"/><path d="M361.2,106 H369" stroke="#7a7a7a" stroke-width="1.6"/><rect x="363.2" y="92.3" width="4" height="12" fill="#7a7a7a"/><g stroke-linecap="round"><path d="M371.95,100.5 H380.05 M376,96.45 V104.55" stroke="#ffffff" stroke-width="6.3"/><path d="M371.95,100.5 H380.05 M376,96.45 V104.55" stroke="#1ec41e" stroke-width="4.3"/></g><path d="M507,103.5 H500.5 Q499.7,103.5 499.7,102.7 V87.4 Q499.7,86.6 500.5,86.6 H506 L507.8,89.8 H518.4 Q519.2,89.8 519.2,90.6 V95" fill="none" stroke="#7a7a7a" stroke-width="1.6" stroke-linejoin="round"/><g stroke-linecap="round"><path d="M510.95,100.4 H519.0500000000001 M515,96.35000000000001 V104.45" stroke="#ffffff" stroke-width="6.3"/><path d="M510.95,100.4 H519.0500000000001 M515,96.35000000000001 V104.45" stroke="#1ec41e" stroke-width="4.3"/></g><path d="M534.8,90.5 V86.2 Q534.8,85.4 535.6,85.4 H540.5 L542.2,88 H550 Q550.8,88 550.8,88.8 V96" fill="none" stroke="#7a7a7a" stroke-width="1.6" stroke-linejoin="round"/><path d="M542,105 H531.5 Q530.8,105 530.8,104.2 V92.2 Q530.8,91.4 531.5,91.4 H535.5 L537.2,93.8 H542" fill="none" stroke="#7a7a7a" stroke-width="1.6" stroke-linejoin="round"/><g stroke-linecap="round"><path d="M542.05,100.4 H550.1500000000001 M546.1,96.35000000000001 V104.45" stroke="#ffffff" stroke-width="6.3"/><path d="M542.05,100.4 H550.1500000000001 M546.1,96.35000000000001 V104.45" stroke="#1ec41e" stroke-width="4.3"/></g><rect x="561" y="82.5" width="1" height="27" fill="#e3e5e9"/><path d="M567.8,89.3 H587.8" stroke="#7a7a7a" stroke-width="1.8"/><path d="M574.5,89 V86.8 Q574.5,86 575.3,86 H581.7 Q582.5,86 582.5,86.8 V89" fill="none" stroke="#7a7a7a" stroke-width="1.6"/><path d="M570.6,89.5 V105 Q570.6,105.8 571.4,105.8 H584.2 Q585,105.8 585,105 V89.5" fill="none" stroke="#7a7a7a" stroke-width="1.7"/><path d="M574.3,93.2 V102.3 M577.8,93.2 V102.3 M581.3,93.2 V102.3" stroke="#7a7a7a" stroke-width="1.6"/><rect x="597.5" y="82.5" width="1" height="27" fill="#e3e5e9"/><path d="M604.2,86.1 H615.5 L620.5,91.1 V95" fill="none" stroke="#7a7a7a" stroke-width="1.6"/><path d="M615.5,86.1 V91.1 H620.5" fill="none" stroke="#7a7a7a" stroke-width="1.4"/><path d="M604.2,86.1 V104.2 H612" fill="none" stroke="#7a7a7a" stroke-width="1.6"/><rect x="606.7" y="88.6" width="6" height="13.6" fill="#7a7a7a"/><path d="M613.6,94.4 L625.8,100.8 L613.6,107.2 Z" fill="#1ec41e" stroke="#fff" stroke-width="0.8"/><path d="M639.5,86.1 H651 L656,91.1 V104.2 H639.5 Z" fill="none" stroke="#7a7a7a" stroke-width="1.6" stroke-linejoin="round"/><path d="M651,86.1 V91.1 H656" fill="none" stroke="#7a7a7a" stroke-width="1.4"/><path d="M641.5,88.2 H650 V92.5 H653.5 V97.2 H641.5 Z" fill="#7a7a7a"/><path d="M634.3,94.2 L641.3,100.6 L634.3,107 Z" fill="#1ba1e2" stroke="#fff" stroke-width="1" paint-order="stroke"/><rect x="641.6" y="99" width="12.8" height="3" rx="1.4" fill="#1ba1e2" stroke="#fff" stroke-width="1" paint-order="stroke"/><rect x="665" y="82.5" width="1" height="27" fill="#e3e5e9"/><path d="M676.8,91.5 L682,85.4 L687.3,91.5 Z" fill="#1ba1e2"/><rect x="680.1" y="91.3" width="4" height="14.6" fill="#777"/><rect x="711" y="85.7" width="4" height="14.9" fill="#777"/><path d="M707.8,100.4 L718.2,100.4 L713,106.6 Z" fill="#1ba1e2"/><path d="M739.6,90.6 L733.4,95.8 L739.6,101 Z" fill="#1ba1e2"/><rect x="739.4" y="93.9" width="15" height="3.8" fill="#777"/><rect x="764.6" y="93.9" width="15" height="3.8" fill="#777"/><path d="M779.4,90.6 L785.6,95.8 L779.4,101 Z" fill="#1ba1e2"/><rect x="794.3" y="82.5" width="1" height="27" fill="#e3e5e9"/><rect x="806" y="85.1" width="11" height="10" rx="1.5" fill="#1ba1e2"/><path d="M808.6,90.1 L810.6,92.1 L814.4,88.1" fill="none" stroke="#fff" stroke-width="1.5"/><rect x="806" y="96.8" width="11" height="10" rx="1.5" fill="#1ba1e2"/><path d="M808.6,101.8 L810.6,103.8 L814.4,99.8" fill="none" stroke="#fff" stroke-width="1.5"/><rect x="837.95" y="85.85" width="9.5" height="8.5" rx="1.2" fill="none" stroke="#1ba1e2" stroke-width="1.5"/><rect x="837.95" y="97.55" width="9.5" height="8.5" rx="1.2" fill="none" stroke="#1ba1e2" stroke-width="1.5"/><rect x="862.9" y="85.1" width="10" height="10" rx="1.5" fill="#1ba1e2"/><path d="M865.5,90.1 L867.5,92.1 L871.3,88.1" fill="none" stroke="#fff" stroke-width="1.5"/><rect x="875.15" y="85.85" width="9.0" height="8.5" rx="1.2" fill="none" stroke="#1ba1e2" stroke-width="1.5"/><rect x="863.65" y="97.55" width="8.5" height="8.5" rx="1.2" fill="none" stroke="#1ba1e2" stroke-width="1.5"/><rect x="874.4" y="96.8" width="10.5" height="10" rx="1.5" fill="#1ba1e2"/><path d="M877.0,101.8 L879.0,103.8 L882.8,99.8" fill="none" stroke="#fff" stroke-width="1.5"/><rect x="896.9" y="88.2" width="15.6" height="15.6" rx="3.5" fill="none" stroke="#1ba1e2" stroke-width="1.7"/><rect x="899.8" y="91" width="9.9" height="10" rx="1" fill="#1ba1e2"/><path d="M902.2,96 L904.2,98 L907.6,94" fill="none" stroke="#fff" stroke-width="1.5"/><rect x="927.9" y="88.2" width="15.6" height="15.6" rx="3.5" fill="none" stroke="#1ba1e2" stroke-width="1.7"/><rect x="931.2" y="91.5" width="9" height="9" rx="0.8" fill="none" stroke="#1ba1e2" stroke-width="1.6"/><path d="M248.5,144.5 V315.5 M250,144.5 H258 M250,163.5 H258 M255,182.5 H258 M250,277.5 H258 M250,296.5 H258 M250,315.5 H258 M267.5,192 V239.5 M269,201.5 H277 M269,220.5 H277 M269,239.5 H277" fill="none" stroke="#cfcfcf" stroke-width="1" stroke-dasharray="1,1"/><path d="M242.8,180.2 L247.20000000000002,185.0 L251.60000000000002,180.2" fill="none" stroke="#555" stroke-width="1.5"/><path d="M245.4,254.2 L250.20000000000002,258.5 L245.4,262.8" fill="none" stroke="#555" stroke-width="1.5"/><rect x="260.6" y="137.9" width="13" height="13" fill="#fff" stroke="#bfc7d4" stroke-width="1"/><path d="M263.3,144.70000000000002 L265.70000000000005,147.6 L270.90000000000003,140.6" fill="none" stroke="#1a1a1a" stroke-width="1.15"/><g transform="translate(276.0,136)" stroke="#26a03a" stroke-width="1.3" stroke-linejoin="round" fill="#7fcb8c"><path d="M3.4,8.6 L5.7,6.9 L8.2,9.7 L6.2,11.4 Z"/><path d="M8.6,11.4 V5.6 L9.6,3.4 L13.8,6.1 H15.3 V11.4 H10.4 V9.4"/></g><path d="M284.6,141 V146.5" stroke="#1f8f2f" stroke-width="1.6"/><rect x="429.2" y="137.9" width="13" height="13" fill="#fff" stroke="#bfc7d4" stroke-width="1"/><path d="M431.9,144.70000000000002 L434.3,147.6 L439.5,140.6" fill="none" stroke="#1a1a1a" stroke-width="1.15"/><rect x="260.6" y="156.9" width="13" height="13" fill="#fff" stroke="#bfc7d4" stroke-width="1"/><path d="M263.3,163.70000000000002 L265.70000000000005,166.6 L270.90000000000003,159.6" fill="none" stroke="#1a1a1a" stroke-width="1.15"/><g transform="translate(276.0,155)" stroke="#26a03a" stroke-width="1.3" stroke-linejoin="round" fill="#7fcb8c"><path d="M3.4,8.6 L5.7,6.9 L8.2,9.7 L6.2,11.4 Z"/><path d="M8.6,11.4 V5.6 L9.6,3.4 L13.8,6.1 H15.3 V11.4 H10.4 V9.4"/></g><path d="M284.6,160 V165.5" stroke="#1f8f2f" stroke-width="1.6"/><rect x="429.2" y="156.9" width="13" height="13" fill="#fff" stroke="#bfc7d4" stroke-width="1"/><path d="M431.9,163.70000000000002 L434.3,166.6 L439.5,159.6" fill="none" stroke="#1a1a1a" stroke-width="1.15"/><rect x="260.6" y="175.9" width="13" height="13" fill="#fff" stroke="#bfc7d4" stroke-width="1"/><path d="M263.3,182.70000000000002 L265.70000000000005,185.6 L270.90000000000003,178.6" fill="none" stroke="#1a1a1a" stroke-width="1.15"/><g transform="translate(276.0,174)" stroke="#26a03a" stroke-width="1.3" stroke-linejoin="round" fill="#7fcb8c"><path d="M3.4,8.6 L5.7,6.9 L8.2,9.7 L6.2,11.4 Z"/><path d="M8.6,11.4 V5.6 L9.6,3.4 L13.8,6.1 H15.3 V11.4 H10.4 V9.4"/></g><path d="M284.6,179 V184.5" stroke="#1f8f2f" stroke-width="1.6"/><rect x="429.2" y="175.9" width="13" height="13" fill="#fff" stroke="#bfc7d4" stroke-width="1"/><path d="M431.9,182.70000000000002 L434.3,185.6 L439.5,178.6" fill="none" stroke="#1a1a1a" stroke-width="1.15"/><rect x="279.7" y="194.9" width="13" height="13" fill="#fff" stroke="#bfc7d4" stroke-width="1"/><path d="M282.4,201.70000000000002 L284.8,204.6 L290.0,197.6" fill="none" stroke="#1a1a1a" stroke-width="1.15"/><g transform="translate(295.09999999999997,193)" stroke="#26a03a" stroke-width="1.3" stroke-linejoin="round" fill="#7fcb8c"><path d="M3.4,8.6 L5.7,6.9 L8.2,9.7 L6.2,11.4 Z"/><path d="M8.6,11.4 V5.6 L9.6,3.4 L13.8,6.1 H15.3 V11.4 H10.4 V9.4"/></g><path d="M303.7,198 V203.5" stroke="#1f8f2f" stroke-width="1.6"/><rect x="429.2" y="194.9" width="13" height="13" fill="#fff" stroke="#bfc7d4" stroke-width="1"/><path d="M431.9,201.70000000000002 L434.3,204.6 L439.5,197.6" fill="none" stroke="#1a1a1a" stroke-width="1.15"/><rect x="279.7" y="213.9" width="13" height="13" fill="#fff" stroke="#bfc7d4" stroke-width="1"/><path d="M282.4,220.70000000000002 L284.8,223.6 L290.0,216.6" fill="none" stroke="#1a1a1a" stroke-width="1.15"/><g transform="translate(295.09999999999997,212)" stroke="#26a03a" stroke-width="1.3" stroke-linejoin="round" fill="#7fcb8c"><path d="M3.4,8.6 L5.7,6.9 L8.2,9.7 L6.2,11.4 Z"/><path d="M8.6,11.4 V5.6 L9.6,3.4 L13.8,6.1 H15.3 V11.4 H10.4 V9.4"/></g><path d="M303.7,217 V222.5" stroke="#1f8f2f" stroke-width="1.6"/><rect x="429.2" y="213.9" width="13" height="13" fill="#fff" stroke="#bfc7d4" stroke-width="1"/><path d="M431.9,220.70000000000002 L434.3,223.6 L439.5,216.6" fill="none" stroke="#1a1a1a" stroke-width="1.15"/><rect x="279.7" y="232.9" width="13" height="13" fill="#fff" stroke="#bfc7d4" stroke-width="1"/><path d="M282.4,239.70000000000002 L284.8,242.6 L290.0,235.6" fill="none" stroke="#1a1a1a" stroke-width="1.15"/><g transform="translate(295.09999999999997,231)" stroke="#26a03a" stroke-width="1.3" stroke-linejoin="round" fill="#7fcb8c"><path d="M3.4,8.6 L5.7,6.9 L8.2,9.7 L6.2,11.4 Z"/><path d="M8.6,11.4 V5.6 L9.6,3.4 L13.8,6.1 H15.3 V11.4 H10.4 V9.4"/></g><path d="M303.7,236 V241.5" stroke="#1f8f2f" stroke-width="1.6"/><rect x="429.2" y="232.9" width="13" height="13" fill="#fff" stroke="#bfc7d4" stroke-width="1"/><path d="M431.9,239.70000000000002 L434.3,242.6 L439.5,235.6" fill="none" stroke="#1a1a1a" stroke-width="1.15"/><rect x="260.6" y="251.9" width="13" height="13" fill="#fff" stroke="#bfc7d4" stroke-width="1"/><path d="M263.3,258.7 L265.70000000000005,261.6 L270.90000000000003,254.6" fill="none" stroke="#1a1a1a" stroke-width="1.15"/><g transform="translate(276.0,250)" stroke="#26a03a" stroke-width="1.3" stroke-linejoin="round" fill="#7fcb8c"><path d="M3.4,8.6 L5.7,6.9 L8.2,9.7 L6.2,11.4 Z"/><path d="M8.6,11.4 V5.6 L9.6,3.4 L13.8,6.1 H15.3 V11.4 H10.4 V9.4"/></g><path d="M284.6,255 V260.5" stroke="#1f8f2f" stroke-width="1.6"/><rect x="429.2" y="251.9" width="13" height="13" fill="#fff" stroke="#bfc7d4" stroke-width="1"/><path d="M431.9,258.7 L434.3,261.6 L439.5,254.6" fill="none" stroke="#1a1a1a" stroke-width="1.15"/><rect x="260.6" y="270.9" width="13" height="13" fill="#fff" stroke="#bfc7d4" stroke-width="1"/><path d="M263.3,277.7 L265.70000000000005,280.59999999999997 L270.90000000000003,273.59999999999997" fill="none" stroke="#1a1a1a" stroke-width="1.15"/><g transform="translate(276.0,269)" stroke="#26a03a" stroke-width="1.3" stroke-linejoin="round" fill="#7fcb8c"><path d="M3.4,8.6 L5.7,6.9 L8.2,9.7 L6.2,11.4 Z"/><path d="M8.6,11.4 V5.6 L9.6,3.4 L13.8,6.1 H15.3 V11.4 H10.4 V9.4"/></g><path d="M284.6,274 V279.5" stroke="#1f8f2f" stroke-width="1.6"/><rect x="429.2" y="270.9" width="13" height="13" fill="#fff" stroke="#bfc7d4" stroke-width="1"/><path d="M431.9,277.7 L434.3,280.59999999999997 L439.5,273.59999999999997" fill="none" stroke="#1a1a1a" stroke-width="1.15"/><rect x="260.6" y="289.9" width="13" height="13" fill="#fff" stroke="#bfc7d4" stroke-width="1"/><path d="M263.3,296.7 L265.70000000000005,299.59999999999997 L270.90000000000003,292.59999999999997" fill="none" stroke="#1a1a1a" stroke-width="1.15"/><g transform="translate(276.0,288)" stroke="#26a03a" stroke-width="1.3" stroke-linejoin="round" fill="#7fcb8c"><path d="M3.4,8.6 L5.7,6.9 L8.2,9.7 L6.2,11.4 Z"/><path d="M8.6,11.4 V5.6 L9.6,3.4 L13.8,6.1 H15.3 V11.4 H10.4 V9.4"/></g><path d="M284.6,293 V298.5" stroke="#1f8f2f" stroke-width="1.6"/><rect x="429.2" y="289.9" width="13" height="13" fill="#fff" stroke="#bfc7d4" stroke-width="1"/><path d="M431.9,296.7 L434.3,299.59999999999997 L439.5,292.59999999999997" fill="none" stroke="#1a1a1a" stroke-width="1.15"/><rect x="260.6" y="308.9" width="13" height="13" fill="#fff" stroke="#bfc7d4" stroke-width="1"/><path d="M263.3,315.7 L265.70000000000005,318.59999999999997 L270.90000000000003,311.59999999999997" fill="none" stroke="#1a1a1a" stroke-width="1.15"/><g transform="translate(276.0,307)" stroke="#26a03a" stroke-width="1.3" stroke-linejoin="round" fill="#7fcb8c"><path d="M3.4,8.6 L5.7,6.9 L8.2,9.7 L6.2,11.4 Z"/><path d="M8.6,11.4 V5.6 L9.6,3.4 L13.8,6.1 H15.3 V11.4 H10.4 V9.4"/></g><path d="M284.6,312 V317.5" stroke="#1f8f2f" stroke-width="1.6"/><rect x="429.2" y="308.9" width="13" height="13" fill="#fff" stroke="#bfc7d4" stroke-width="1"/><path d="M431.9,315.7 L434.3,318.59999999999997 L439.5,311.59999999999997" fill="none" stroke="#1a1a1a" stroke-width="1.15"/></svg>
<svg style="position:absolute;left:0;top:0" width="1062" height="562" viewBox="0 0 1062 562"><g fill="#111"><circle cx="585.6" cy="220.8" r="1.3"/><circle cx="589.6" cy="220.8" r="1.3"/><circle cx="593.6" cy="220.8" r="1.3"/></g><g fill="#111"><circle cx="1049.2" cy="220.4" r="1.3"/><circle cx="1053.2" cy="220.4" r="1.3"/><circle cx="1057.2" cy="220.4" r="1.3"/></g><path d="M938.1,219 H944.3 L941.2,222.2 Z" fill="#111"/><path d="M831,218.8 L833.6,215.6 L836.2,218.8 Z M831,223.2 L833.6,226.4 L836.2,223.2 Z" fill="#222"/><path d="M1000.1,218.6 L1002.9,215.4 L1005.7,218.6 Z M1000.1,223 L1002.9,226.2 L1005.7,223 Z" fill="#222"/></svg>
<div style="position:absolute;left:818.68px;top:211.00px;font-family:'Liberation Sans', sans-serif;font-size:11px;line-height:20px;font-weight:normal;color:#303030;white-space:pre;transform-origin:0 0;transform:scaleX(0.7200)">1</div>
<div style="position:absolute;left:987.70px;top:211.00px;font-family:'Liberation Sans', sans-serif;font-size:11px;line-height:20px;font-weight:normal;color:#303030;white-space:pre;transform-origin:0 0;transform:scaleX(0.8833)">0</div>
<div style="position:absolute;left:661px;top:230px;width:152px;height:65px;box-sizing:border-box;background:#ffffff;border:1px solid #b9c4d2"></div>
<div style="position:absolute;left:662px;top:231px;width:150px;height:11.7px;background:#0a64d8;"></div>
<div style="position:absolute;left:662px;top:231px;width:150px;height:11.7px;box-sizing:border-box;border:1px dotted #f08020"></div>
<div style="position:absolute;left:662.80px;top:226.00px;font-family:'Liberation Sans', sans-serif;font-size:10.5px;line-height:20px;font-weight:normal;color:#ffffff;white-space:pre;transform-origin:0 0;transform:scaleX(0.9600)">Continue running</div>
<div style="position:absolute;left:661.78px;top:239.00px;font-family:'Liberation Sans', sans-serif;font-size:10.5px;line-height:20px;font-weight:normal;color:#222222;white-space:pre;transform-origin:0 0;transform:scaleX(1.0218)">Stop project</div>
<div style="position:absolute;left:661.80px;top:251.60px;font-family:'Liberation Sans', sans-serif;font-size:10.5px;line-height:20px;font-weight:normal;color:#222222;white-space:pre;transform-origin:0 0;transform:scaleX(1.0025)">Stop current item</div>
<div style="position:absolute;left:661.80px;top:264.30px;font-family:'Liberation Sans', sans-serif;font-size:10.5px;line-height:20px;font-weight:normal;color:#222222;white-space:pre;transform-origin:0 0;transform:scaleX(0.9973)">Use project&#x27;s &#x27;On error&#x27; property</div>
<div style="position:absolute;left:661.79px;top:276.60px;font-family:'Liberation Sans', sans-serif;font-size:10.5px;line-height:20px;font-weight:normal;color:#222222;white-space:pre;transform-origin:0 0;transform:scaleX(1.0056)">Stop and rerun current item</div>
<div style="position:absolute;left:655px;top:208px;width:146px;height:26px;box-sizing:border-box;background:#ffffff;border:3px solid #f47b20"></div>
<div style="position:absolute;left:658px;top:211px;width:140px;height:20px;box-sizing:border-box;border:1px dotted #8a8a8a"></div>
<div style="position:absolute;left:660.26px;top:211.00px;font-family:'Liberation Sans', sans-serif;font-size:11px;line-height:20px;font-weight:normal;color:#222222;white-space:pre;transform-origin:0 0;transform:scaleX(0.9366)">Continue running</div>
<div style="position:absolute;left:780px;top:212px;width:18px;height:18px;box-sizing:border-box;background:#eef6fb;border:1px solid #c3d3e0"></div>
<svg style="position:absolute;left:785px;top:219px;overflow:visible" width="7" height="4" viewBox="0 0 7 4"><path d="M0 0 H7 L3.5 3.5 Z" fill="#111"/></svg>
</body></html>
